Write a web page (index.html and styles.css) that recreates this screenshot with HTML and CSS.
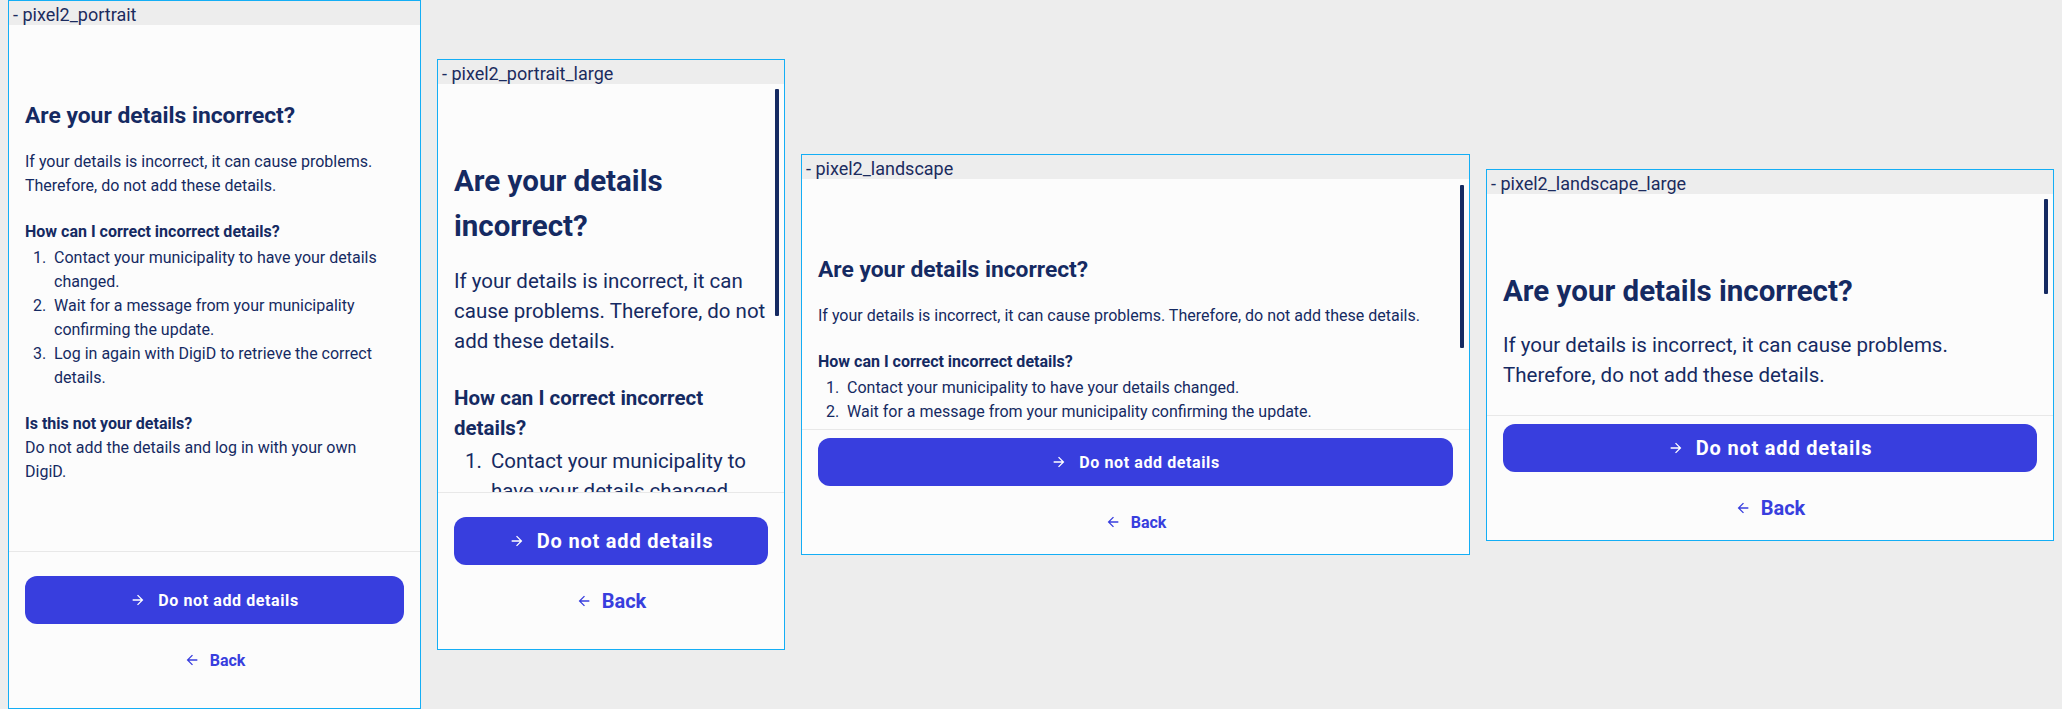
FILE: index.html
```html
<!DOCTYPE html>
<html lang="en">
<head>
<meta charset="utf-8">
<title>Are your details incorrect?</title>
<link rel="stylesheet" href="styles.css">
</head>
<body>
<main class="stage">

  <section class="frame frame--portrait">
    <div class="frame__label">- pixel2_portrait</div>
    <div class="viewport">
      <div class="content">
        <h1 class="title">Are your details incorrect?</h1>
        <p class="lead">If your details is incorrect, it can cause problems. Therefore, do not add these details.</p>
        <h2 class="subhead">How can I correct incorrect details?</h2>
        <ol class="steps">
          <li><span class="num">1.</span><span>Contact your municipality to have your details changed.</span></li>
          <li><span class="num">2.</span><span>Wait for a message from your municipality confirming the update.</span></li>
          <li><span class="num">3.</span><span>Log in again with DigiD to retrieve the correct details.</span></li>
        </ol>
        <h2 class="subhead subhead--gap">Is this not your details?</h2>
        <p class="lead note">Do not add the details and log in with your own DigiD.</p>
      </div>
    </div>
    <footer class="actions">
      <button class="btn-primary" type="button"><svg class="ico" viewBox="0 0 24 24" aria-hidden="true"><path d="M12 4l-1.41 1.41L16.17 11H4v2h12.17l-5.58 5.59L12 20l8-8z"/></svg><span>Do not add details</span></button>
      <button class="btn-link" type="button"><svg class="ico" viewBox="0 0 24 24" aria-hidden="true"><path d="M20 11H7.83l5.59-5.59L12 4l-8 8 8 8 1.41-1.41L7.83 13H20v-2z"/></svg><span>Back</span></button>
    </footer>
  </section>

  <section class="frame frame--portrait-large frame--large">
    <div class="frame__label">- pixel2_portrait_large</div>
    <div class="viewport">
      <div class="content">
        <h1 class="title">Are your details incorrect?</h1>
        <p class="lead">If your details is incorrect, it can cause problems. Therefore, do not add these details.</p>
        <h2 class="subhead">How can I correct incorrect details?</h2>
        <ol class="steps">
          <li><span class="num">1.</span><span>Contact your municipality to have your details changed.</span></li>
          <li><span class="num">2.</span><span>Wait for a message from your municipality confirming the update.</span></li>
          <li><span class="num">3.</span><span>Log in again with DigiD to retrieve the correct details.</span></li>
        </ol>
        <h2 class="subhead subhead--gap">Is this not your details?</h2>
        <p class="lead note">Do not add the details and log in with your own DigiD.</p>
      </div>
      <div class="thumb thumb--portrait-large"></div>
    </div>
    <footer class="actions">
      <button class="btn-primary" type="button"><svg class="ico" viewBox="0 0 24 24" aria-hidden="true"><path d="M12 4l-1.41 1.41L16.17 11H4v2h12.17l-5.58 5.59L12 20l8-8z"/></svg><span>Do not add details</span></button>
      <button class="btn-link" type="button"><svg class="ico" viewBox="0 0 24 24" aria-hidden="true"><path d="M20 11H7.83l5.59-5.59L12 4l-8 8 8 8 1.41-1.41L7.83 13H20v-2z"/></svg><span>Back</span></button>
    </footer>
  </section>

  <section class="frame frame--landscape frame--wide">
    <div class="frame__label">- pixel2_landscape</div>
    <div class="viewport">
      <div class="content">
        <h1 class="title">Are your details incorrect?</h1>
        <p class="lead">If your details is incorrect, it can cause problems. Therefore, do not add these details.</p>
        <h2 class="subhead">How can I correct incorrect details?</h2>
        <ol class="steps">
          <li><span class="num">1.</span><span>Contact your municipality to have your details changed.</span></li>
          <li><span class="num">2.</span><span>Wait for a message from your municipality confirming the update.</span></li>
          <li><span class="num">3.</span><span>Log in again with DigiD to retrieve the correct details.</span></li>
        </ol>
        <h2 class="subhead subhead--gap">Is this not your details?</h2>
        <p class="lead note">Do not add the details and log in with your own DigiD.</p>
      </div>
      <div class="thumb thumb--landscape"></div>
    </div>
    <footer class="actions">
      <button class="btn-primary" type="button"><svg class="ico" viewBox="0 0 24 24" aria-hidden="true"><path d="M12 4l-1.41 1.41L16.17 11H4v2h12.17l-5.58 5.59L12 20l8-8z"/></svg><span>Do not add details</span></button>
      <button class="btn-link" type="button"><svg class="ico" viewBox="0 0 24 24" aria-hidden="true"><path d="M20 11H7.83l5.59-5.59L12 4l-8 8 8 8 1.41-1.41L7.83 13H20v-2z"/></svg><span>Back</span></button>
    </footer>
  </section>

  <section class="frame frame--landscape-large frame--wide frame--large">
    <div class="frame__label">- pixel2_landscape_large</div>
    <div class="viewport">
      <div class="content">
        <h1 class="title">Are your details incorrect?</h1>
        <p class="lead">If your details is incorrect, it can cause problems. Therefore, do not add these details.</p>
        <h2 class="subhead">How can I correct incorrect details?</h2>
        <ol class="steps">
          <li><span class="num">1.</span><span>Contact your municipality to have your details changed.</span></li>
          <li><span class="num">2.</span><span>Wait for a message from your municipality confirming the update.</span></li>
          <li><span class="num">3.</span><span>Log in again with DigiD to retrieve the correct details.</span></li>
        </ol>
        <h2 class="subhead subhead--gap">Is this not your details?</h2>
        <p class="lead note">Do not add the details and log in with your own DigiD.</p>
      </div>
      <div class="thumb thumb--landscape-large"></div>
    </div>
    <footer class="actions">
      <button class="btn-primary" type="button"><svg class="ico" viewBox="0 0 24 24" aria-hidden="true"><path d="M12 4l-1.41 1.41L16.17 11H4v2h12.17l-5.58 5.59L12 20l8-8z"/></svg><span>Do not add details</span></button>
      <button class="btn-link" type="button"><svg class="ico" viewBox="0 0 24 24" aria-hidden="true"><path d="M20 11H7.83l5.59-5.59L12 4l-8 8 8 8 1.41-1.41L7.83 13H20v-2z"/></svg><span>Back</span></button>
    </footer>
  </section>

</main>
</body>
</html>
```

FILE: styles.css
```css
* {
  box-sizing: border-box;
  margin: 0;
  padding: 0;
}

html, body {
  height: 100%;
}

body {
  background: #ededed;
  color: #152a62;
  font-family: Roboto, "Noto Sans", sans-serif;
  overflow: hidden;
}

.stage {
  display: flex;
  align-items: center;
  gap: 16px;
  height: 709px;
  padding-left: 8px;
}

.frame {
  flex: none;
  display: flex;
  flex-direction: column;
  border: 1px solid #14aef5;
  background: #fcfcfc;
  overflow: hidden;

  --fs-title: 22.8px;
  --lh-title: 34.5px;
  --fs-body: 16px;
  --lh-body: 24px;
  --fs-btn: 16px;
  --ls-btn: 0.6px;
  --pad-top: 74px;
  --title-gap: 16px;
  --sub-gap: 22px;
  --list-gap: 2px;
  --num-w: 29px;
  --num-pad: 8px;
  --foot-pad: 24px;
}

.frame--large {
  --fs-title: 29.5px;
  --lh-title: 44.8px;
  --fs-body: 20.5px;
  --lh-body: 30px;
  --fs-btn: 20px;
  --ls-btn: 0.8px;
  --pad-top: 75px;
  --title-gap: 17px;
  --sub-gap: 27px;
  --list-gap: 3px;
  --num-w: 37px;
  --num-pad: 11px;
}

.frame--wide {
  --foot-pad: 8px;
}

.frame--portrait { width: 413px; height: 709px; }
.frame--portrait-large { width: 348px; height: 591px; }
.frame--landscape { width: 669px; height: 401px; }
.frame--landscape-large { width: 568px; height: 372px; }

.frame__label {
  flex: none;
  height: 24px;
  padding: 2px 0 0 4px;
  background: #ededed;
  color: #1b2b5e;
  font-size: 18px;
  line-height: 24px;
  white-space: nowrap;
  overflow: hidden;
}

.viewport {
  flex: 1;
  min-height: 0;
  position: relative;
  overflow: hidden;
}

.content {
  padding: var(--pad-top) 16px 24px;
}

.title {
  font-size: var(--fs-title);
  line-height: var(--lh-title);
  font-weight: 700;
  margin-bottom: var(--title-gap);
}

.lead {
  font-size: var(--fs-body);
  line-height: var(--lh-body);
}

.frame--large .lead {
  max-width: 500px;
}

.note {
  max-width: 355px;
}

.subhead {
  font-size: var(--fs-body);
  line-height: var(--lh-body);
  font-weight: 700;
  margin-top: var(--sub-gap);
}

.subhead--gap {
  margin-top: 22px;
}

.steps {
  list-style: none;
  margin-top: var(--list-gap);
}

.steps li {
  display: flex;
  font-size: var(--fs-body);
  line-height: var(--lh-body);
}

.steps .num {
  flex: none;
  width: var(--num-w);
  padding-left: var(--num-pad);
}

.thumb {
  position: absolute;
  right: 5px;
  top: 5px;
  width: 4px;
  background: #152a62;
  border-radius: 1px;
}

.thumb--portrait-large { height: 227px; }
.thumb--landscape { top: 6px; height: 163px; }
.thumb--landscape-large { height: 95px; }

.actions {
  flex: none;
  border-top: 1px solid #e8e8e8;
  padding: var(--foot-pad) 16px;
  display: flex;
  flex-direction: column;
  gap: 12px;
}

.btn-primary,
.btn-link {
  height: 48px;
  border: 0;
  display: flex;
  align-items: center;
  justify-content: center;
  font-family: inherit;
  font-weight: 700;
  cursor: pointer;
}

.btn-primary {
  gap: 12px;
  border-radius: 12px;
  background: #383ede;
  color: #ffffff;
  font-size: var(--fs-btn);
  letter-spacing: var(--ls-btn);
}

.btn-link {
  gap: 10px;
  background: transparent;
  color: #383ede;
  font-size: var(--fs-btn);
}

.ico {
  flex: none;
  width: 16px;
  height: 16px;
  fill: currentColor;
}
```
